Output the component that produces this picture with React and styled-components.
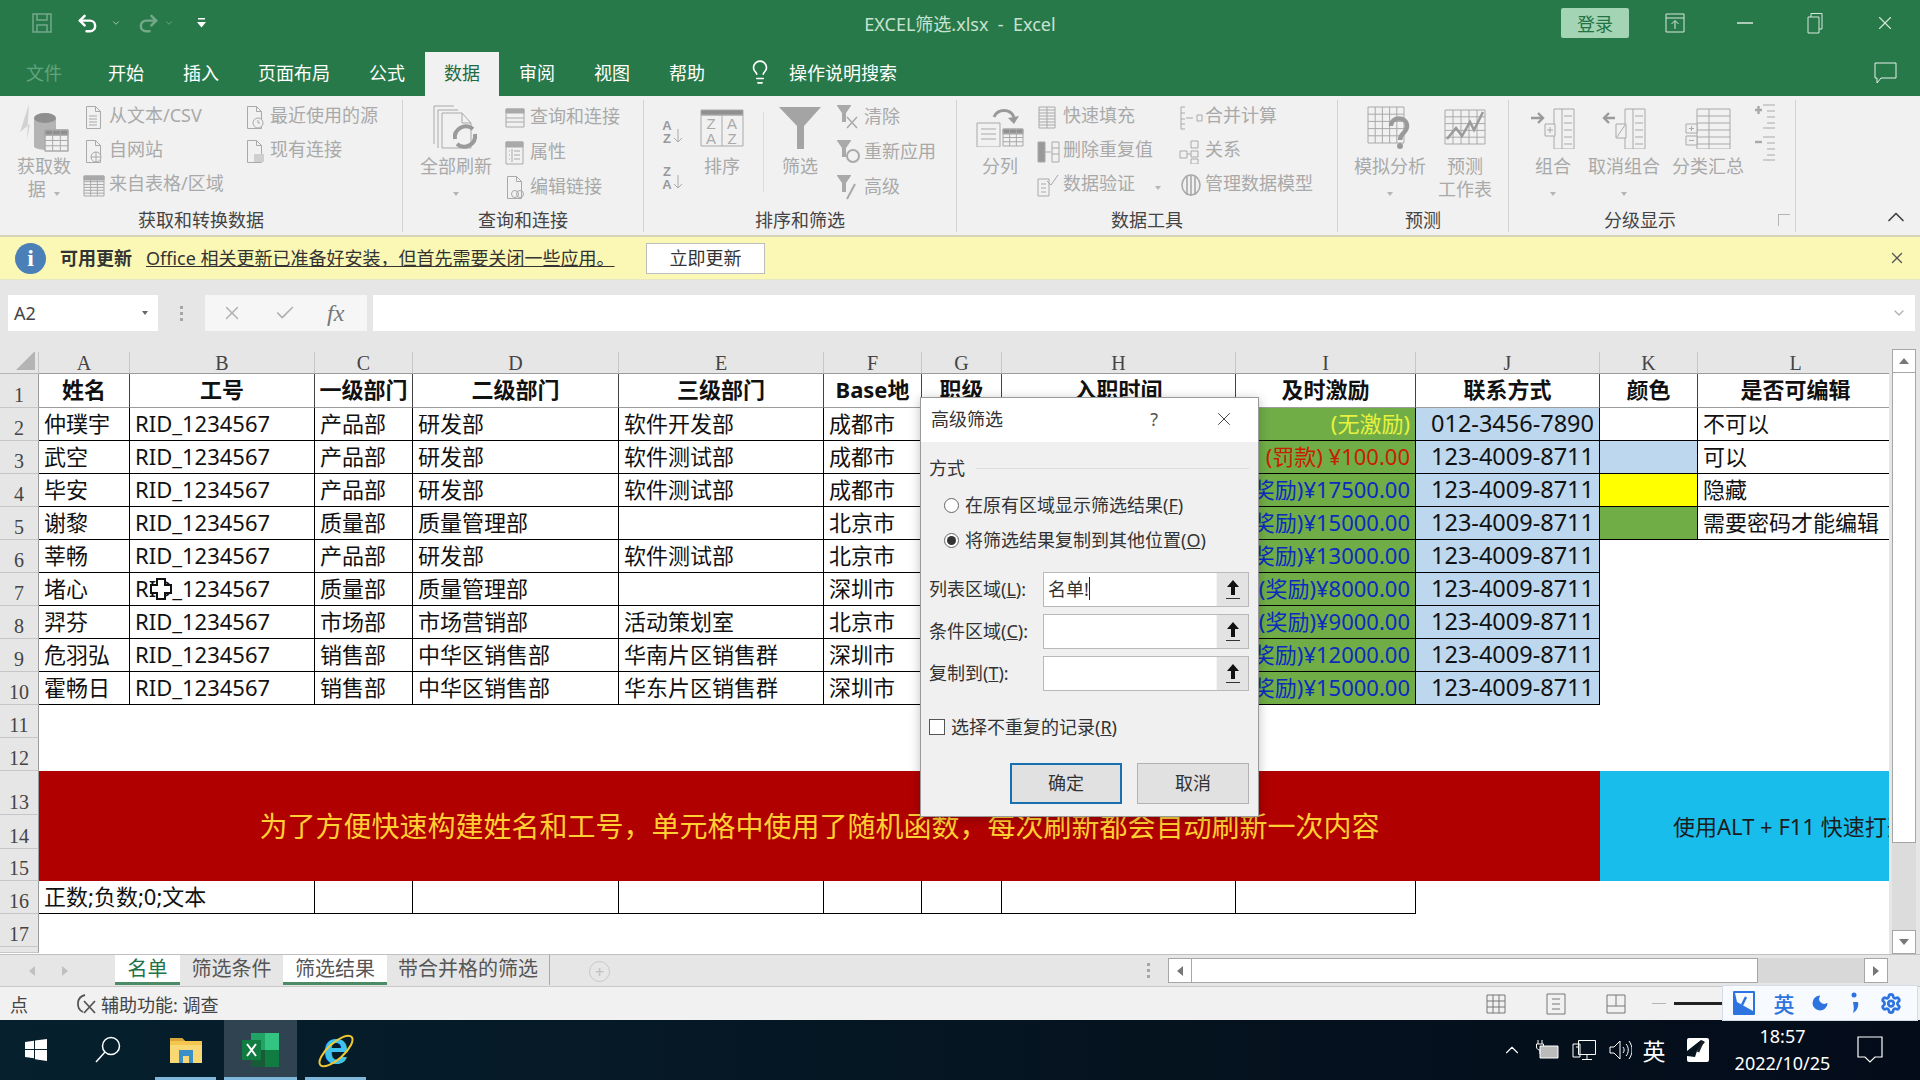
import React from 'react';
import styled, { createGlobalStyle } from 'styled-components';
import { Lightbulb, Undo2, Redo2, Moon, Settings, X, Check, ChevronUp, ChevronDown } from 'lucide-react';

const DIM = '#a9a9a9';
const FONT = '"Noto Sans", "Noto Sans CJK SC", sans-serif';

const GlobalStyle = createGlobalStyle`
  html, body { margin: 0; padding: 0; background: #e6e6e6; overflow: hidden; }
  * { box-sizing: border-box; }
`;

const Svg = ({ w, h, color = DIM, sw = 1, children }) => (
  <svg width={w} height={h} viewBox={`0 0 ${w} ${h}`} fill="none" stroke={color} strokeWidth={sw} aria-hidden="true">
    {children}
  </svg>
);

const Table = ({ x, y, w, h, cols, rows }) => {
  const lines = [];
  for (let i = 1; i < cols; i++) lines.push(`M${x + (w * i) / cols} ${y}v${h}`);
  for (let i = 1; i < rows; i++) lines.push(`M${x} ${y + (h * i) / rows}h${w}`);
  return <path d={`M${x} ${y}h${w}v${h}h-${w}z ${lines.join(' ')}`} />;
};

const PageShape = () => <path d="M4.5 1.5h9l5 5v17h-14z M13.5 1.5v5h5" />;

/* small ribbon icons */
const DocText = () => <Svg w={23} h={25}><PageShape /><path d="M7 11h8M7 14h8M7 17h8M7 20h8" /></Svg>;
const DocWeb = () => <Svg w={23} h={25}><PageShape /><circle cx="14" cy="18" r="5" fill="#f1f1f1" /><path d="M9 18h10M14 13v10" /></Svg>;
const DocClock = () => <Svg w={23} h={25}><PageShape /><circle cx="15" cy="18" r="5" fill="#f1f1f1" /><path d="M15 15v3h2" /></Svg>;
const DocLink = () => <Svg w={23} h={25}><PageShape /><rect x="11" y="15" width="10" height="8" fill="#cfcfcf" stroke="none" /></Svg>;
const DocChain = () => <Svg w={23} h={25}><PageShape /><circle cx="12" cy="19" r="3.5" fill="#f1f1f1" /><circle cx="17" cy="19" r="3.5" /></Svg>;
const SmTable = () => <Svg w={24} h={25}><path d="M2 3h20v4H2z" fill={DIM} /><Table x={2} y={3} w={20} h={20} cols={3} rows={7} /></Svg>;
const SmPanel = () => <Svg w={23} h={24}><path d="M3 3h18v4H3z" fill={DIM} /><Table x={3} y={3} w={18} h={18} cols={1} rows={1} /><path d="M3 12h18M3 16h18" /></Svg>;
const PropsIcon = () => <Svg w={22} h={25}><path d="M3 2h17v5H3z" fill={DIM} /><path d="M3 2h17v22H3z M9 9v13M6 11h1M11 11h6M6 15h1M11 15h6M6 19h1M11 19h6" /></Svg>;
const Funnel = ({ w = 14, h = 17 }) => (
  <svg width={w} height={h} viewBox="0 0 14 17" aria-hidden="true"><path d="M0 0h14L8.5 8v9h-3V8z" fill={DIM} /></svg>
);
const ClearFilter = () => <Svg w={25} h={25}><Funnel /><path d="M10 12l10 11M20 12L10 23" strokeWidth="1.5" /></Svg>;
const ReapplyFilter = () => <Svg w={25} h={25}><Funnel /><circle cx="16" cy="16" r="6" strokeWidth="2" /></Svg>;
const AdvFilter = () => <Svg w={25} h={25}><Funnel /><path d="M18 9L10 24" strokeWidth="2" /></Svg>;
const FlashFill = () => <Svg w={22} h={25}><Table x={3} y={2} w={16} h={21} cols={2} rows={7} /></Svg>;
const Dedupe = () => <Svg w={25} h={25}><path d="M2 3h7v20H2z" fill="#999" /><path d="M16 3h7v20h-7zM16 9h7M16 15h7M9 13h6" /></Svg>;
const Validate = () => <Svg w={25} h={25}><path d="M2 6h11v17H2zM5 11h5M5 15h5M5 19h5M11 8l4 4 7-10" /></Svg>;
const Consolidate = () => <Svg w={25} h={25}><path d="M3 2v22M3 2h4M3 24h4M3 8h4M3 14h4M3 19h4M8 13h7M19 10h5v6h-5z" /></Svg>;
const Relations = () => <Svg w={25} h={25}><path d="M2 12h7v7H2zM13 2h7v7h-7zM13 12h7v6h-7zM13 20h7v5h-7zM9 15h4" /></Svg>;
const DataModel = () => <Svg w={25} h={25} sw={1.6}><ellipse cx="13" cy="12" rx="9" ry="10" /><path d="M9 4v18M13 3v20M17 4v18" /></Svg>;
const OutlineAdd = () => <Svg w={24} h={28}><path d="M10 3h12M14 9h8M14 15h8M14 21h8M10 26h12" /><path d="M2 8h7M5.5 4v8" stroke={DIM} strokeWidth="2.4" /></Svg>;
const OutlineDel = () => <Svg w={24} h={28}><path d="M10 3h12M14 9h8M14 15h8M14 21h8M10 26h12" /><path d="M2 8h7" stroke={DIM} strokeWidth="2.4" /></Svg>;

/* big ribbon icons */
const GetDataIcon = () => (
  <Svg w={50} h={48}>
    <path d="M10 0L1 28l10-8-3 16z" fill="#d2d2d2" stroke="none" />
    <path d="M15 14v28c0 5 22 5 22 0V14" fill="#b4b4b4" stroke="none" />
    <ellipse cx="26" cy="14" rx="11" ry="5" fill="#8f8f8f" stroke="none" />
    <rect x="26" y="26" width="23" height="21" fill="#f1f1f1" />
    <path d="M26 26h23v5H26z" fill="#8f8f8f" />
    <Table x={26} y={26} w={23} h={21} cols={3} rows={4} />
  </Svg>
);
const RefreshIcon = () => (
  <Svg w={46} h={48}>
    <path d="M1 2h20M1 2v38M5 6h20M5 6v38" />
    <path d="M9 9h20l9 10v25H9z M29 9v10h9" fill="#f1f1f1" />
    <path d="M22 35a11 11 0 0 1 18-10" stroke="#9a9a9a" strokeWidth="4" />
    <path d="M42 30a11 11 0 0 1-18 10" stroke="#9a9a9a" strokeWidth="4" />
  </Svg>
);
const SheetLetter = ({ x, y, children }) => (
  <text x={x} y={y} textAnchor="middle" fontFamily="Liberation Sans, sans-serif" fontSize="15" fill={DIM} stroke="none">{children}</text>
);
const SortBigIcon = () => (
  <Svg w={44} h={38}>
    <path d="M1 1h42v5H1z" fill="#8f8f8f" />
    <path d="M1 6h42v31H1zM22 6v31" />
    <SheetLetter x={11} y={20}>Z</SheetLetter><SheetLetter x={32} y={20}>A</SheetLetter>
    <SheetLetter x={11} y={35}>A</SheetLetter><SheetLetter x={32} y={35}>Z</SheetLetter>
  </Svg>
);
const SortAZ = ({ top, bottom }) => (
  <Svg w={22} h={26}>
    <text x="6" y="12" textAnchor="middle" fontFamily="Liberation Sans, sans-serif" fontWeight="700" fontSize="13" fill="#999" stroke="none">{top}</text>
    <text x="6" y="25" textAnchor="middle" fontFamily="Liberation Sans, sans-serif" fontWeight="700" fontSize="13" fill="#999" stroke="none">{bottom}</text>
    <path d="M17 11v13M13 20l4 4 4-4" />
  </Svg>
);
const BigFunnel = () => (
  <svg width="42" height="42" viewBox="0 0 42 42" aria-hidden="true"><path d="M0 0h42L25 19v23h-7V19z" fill="#a4a4a4" /></svg>
);
const SplitIcon = () => (
  <Svg w={48} h={38}>
    <path d="M18 8a11 11 0 0 1 20 0" stroke="#999" strokeWidth="3" />
    <path d="M32 9l6 6 5-8z" fill="#999" stroke="none" />
    <path d="M1 14h23v24H1zM5 20h15M5 25h15M5 30h15" />
    <path d="M27 20h20v5H27z" fill="#8f8f8f" />
    <Table x={27} y={20} w={20} h={17} cols={3} rows={4} />
  </Svg>
);
const WhatIfIcon = () => (
  <Svg w={46} h={44}>
    <Table x={1} y={1} w={36} h={36} cols={5} rows={5} />
    <path d="M24 20c0-10 16-10 16 0 0 7-7 7-7 14" stroke="#9a9a9a" strokeWidth="4.5" />
    <circle cx="33" cy="40" r="3" fill="#9a9a9a" stroke="none" />
  </Svg>
);
const ForecastIcon = () => (
  <Svg w={42} h={38}>
    <Table x={1} y={1} w={40} h={34} cols={5} rows={5} />
    <path d="M3 30l9-11 6 8 8-14 4 8 9-18" stroke="#9a9a9a" strokeWidth="2.5" />
  </Svg>
);
const GroupIcon = () => (
  <Svg w={46} h={42}>
    <path d="M1 11h11M8 6l5 5-5 5" stroke="#9a9a9a" strokeWidth="2.4" />
    <path d="M24 2h20v40H24zM32 2v40M34 9h8M34 16h8M34 23h8M34 30h8M34 37h8" />
    <path d="M15 17h10v12H15zM20 20v6M17 23h6" fill="#f1f1f1" />
  </Svg>
);
const UngroupIcon = () => (
  <Svg w={46} h={42}>
    <path d="M14 11H3M8 6l-5 5 5 5" stroke="#9a9a9a" strokeWidth="2.4" />
    <path d="M24 2h20v40H24zM32 2v40M34 9h8M34 16h8M34 23h8M34 30h8M34 37h8" />
    <path d="M15 17h10v14H15zM16 30L24 18" fill="#f1f1f1" />
  </Svg>
);
const SubtotalIcon = () => (
  <Svg w={46} h={42}>
    <path d="M12 2h33v40H12zM24 2v40M12 9h33M12 16h33M12 23h33M12 30h33M12 37h33" />
    <path d="M1 17h11v9H1zM1 29h11v9H1zM6.5 19v5M4 21.5h5M4 33.5h5" fill="#f1f1f1" />
  </Svg>
);

const Page = styled.div`
  position: relative;
  width: 1920px;
  height: 1080px;
  display: flex;
  flex-direction: column;
  overflow: hidden;
  font-family: ${FONT};
  color: #333;
  background: #e6e6e6;
`;

const Header = styled.header`
  height: 96px;
  background: #28794a;
  color: #fff;
  flex: none;
`;

const TitleBar = styled.div`
  height: 46px;
  display: grid;
  grid-template-columns: 1fr auto 1fr;
  align-items: center;
`;

const Qat = styled.div`
  display: flex;
  align-items: center;
  padding-left: 31px;
`;

const QatSlot = styled.span`
  display: flex;
  justify-content: center;
  width: ${(p) => p.$w}px;
  margin-right: ${(p) => p.$mr || 0}px;
  opacity: ${(p) => (p.$dim ? 0.35 : 1)};
`;

const DocTitle = styled.div`
  font-size: 18px;
  color: #c8e2d2;
  white-space: pre;
`;

const WinControls = styled.div`
  display: flex;
  align-items: center;
  justify-content: flex-end;
`;

const LoginButton = styled.div`
  width: 68px;
  height: 30px;
  margin-right: 11px;
  display: flex;
  align-items: center;
  justify-content: center;
  background: #a3d4b3;
  color: #217346;
  font-size: 18px;
  border-radius: 2px;
`;

const WinSlot = styled.span`
  width: 70px;
  display: flex;
  justify-content: center;
`;

const TabRow = styled.nav`
  height: 50px;
  display: flex;
  align-items: flex-end;
  gap: 1px;
  padding-left: 7px;
  font-size: 18px;
`;

const Tab = styled.div`
  height: 44px;
  padding: 0 19px 4px;
  display: flex;
  align-items: center;
  margin-right: ${(p) => p.$mr || 0}px;
  color: ${(p) => (p.$dim ? '#62a47d' : p.$active ? '#1f6b42' : '#fff')};
  background: ${(p) => (p.$active ? '#f1f1f1' : 'transparent')};
`;

const SearchHint = styled.div`
  height: 44px;
  padding-bottom: 4px;
  display: flex;
  align-items: center;
  gap: 16px;
  margin-left: 22px;
`;

const CommentSlot = styled.div`
  height: 44px;
  padding-bottom: 2px;
  display: flex;
  align-items: center;
  margin-left: auto;
  padding-right: 23px;
`;

const Ribbon = styled.section`
  height: 139px;
  flex: none;
  display: flex;
  background: #f1f1f1;
  padding: 4px 0 3px;
`;

const Group = styled.div`
  position: relative;
  width: ${(p) => p.$w}px;
  flex: none;
  display: flex;
  flex-direction: column;
  border-right: 1px solid #d2d2d2;
`;

const Tools = styled.div`
  flex: 1;
  display: flex;
  padding-left: ${(p) => p.$pl}px;
`;

const GroupLabel = styled.div`
  height: 27px;
  padding: 3px ${(p) => p.$pr || 0}px 0 0;
  text-align: center;
  font-size: 18px;
  line-height: 24px;
  color: #444;
`;

const BigTool = styled.div`
  width: ${(p) => p.$w}px;
  margin-left: ${(p) => p.$ml || 0}px;
  flex: none;
  display: flex;
  flex-direction: column;
  align-items: center;
  color: ${DIM};
  font-size: 18px;
  line-height: 23px;
  white-space: nowrap;
`;

const BigIcon = styled.div`
  height: 55px;
  display: flex;
  align-items: center;
  justify-content: center;
`;

const SmallCol = styled.div`
  width: ${(p) => (p.$w ? `${p.$w}px` : 'auto')};
  margin-left: ${(p) => p.$ml || 0}px;
  flex: none;
`;

const SmallItem = styled.div`
  height: ${(p) => p.$h || 34}px;
  display: flex;
  align-items: center;
  color: ${DIM};
  font-size: 18px;
  line-height: 24px;
  white-space: nowrap;
`;

const SmallLabel = styled.span`
  position: relative;
  top: -2px;
`;

const SmallIcon = styled.span`
  width: 27px;
  flex: none;
  display: flex;
  align-items: center;
`;

const Caret = styled.span`
  display: inline-block;
  width: 0;
  height: 0;
  margin-left: ${(p) => p.$ml || 0}px;
  border-left: 3px solid transparent;
  border-right: 3px solid transparent;
  border-top: 4px solid ${(p) => p.$color || '#b5b5b5'};
`;

const SortCol = styled.div`
  width: 24px;
  flex: none;
  display: flex;
  flex-direction: column;
  gap: 20px;
  padding-top: 18px;
`;

const ToolDivider = styled.div`
  width: 1px;
  height: 80px;
  margin: 12px 0 0 19px;
  background: #dcdcdc;
  flex: none;
`;

const OutlineCol = styled.div`
  width: 24px;
  margin-left: 7px;
  flex: none;
  display: flex;
  flex-direction: column;
  gap: 4px;
  padding-top: 2px;
`;

const Launcher = styled.span`
  position: absolute;
  right: 5px;
  bottom: 6px;
  width: 12px;
  height: 12px;
  border-left: 1px solid #b5b5b5;
  border-top: 1px solid #b5b5b5;
`;

const CollapseSlot = styled.div`
  flex: 1;
  display: flex;
  align-items: flex-end;
  justify-content: flex-end;
  padding: 0 10px 1px 0;
`;

const Notice = styled.section`
  height: 45px;
  flex: none;
  display: flex;
  align-items: center;
  background: #fbf8b6;
  border-top: 2px solid #d3d3b6;
  border-bottom: 1px solid #e6e6c8;
  padding-left: 15px;
  font-size: 18px;
  color: #333;
`;

const InfoDot = styled.span`
  width: 31px;
  height: 31px;
  border-radius: 50%;
  background: #4a7fb8;
  color: #fff;
  display: flex;
  align-items: center;
  justify-content: center;
  font-family: "Liberation Serif", serif;
  font-weight: 700;
  font-size: 24px;
`;

const NoticeTitle = styled.strong`
  margin-left: 14px;
  margin-top: -2px;
  font-weight: 700;
  width: 86px;
`;

const NoticeLink = styled.span`
  margin-top: -2px;
  text-decoration: underline;
  width: 500px;
`;

const NoticeButton = styled.div`
  width: 119px;
  height: 31px;
  padding-bottom: 2px;
  display: flex;
  align-items: center;
  justify-content: center;
  background: #fff;
  border: 1px solid #bdbdbd;
`;

const NoticeClose = styled.span`
  margin-left: auto;
  margin-right: 14px;
  display: flex;
`;

const FormulaArea = styled.section`
  height: 72px;
  flex: none;
  display: flex;
  padding: 15px 5px 21px 8px;
  background: #e6e6e6;
`;

const NameBox = styled.div`
  width: 150px;
  display: flex;
  align-items: center;
  justify-content: space-between;
  padding: 0 10px 0 6px;
  background: #fff;
  font-size: 18px;
  color: #444;
`;

const VDots = styled.div`
  width: 47px;
  display: flex;
  flex-direction: column;
  align-items: center;
  justify-content: center;
  gap: 3px;
`;

const VDot = styled.i`
  width: 3px;
  height: 3px;
  background: #a6a6a6;
`;

const FxBox = styled.div`
  width: 162px;
  display: flex;
  align-items: center;
  gap: 31px;
  padding-left: 16px;
  background: #f6f6f6;
`;

const FxText = styled.span`
  font-family: "Liberation Serif", serif;
  font-style: italic;
  font-size: 24px;
  color: #777;
`;

const FormulaInput = styled.div`
  flex: 1;
  margin-left: 6px;
  background: #fff;
  display: flex;
  align-items: center;
  justify-content: flex-end;
  padding-right: 8px;
`;

const SheetArea = styled.section`
  height: 602px;
  flex: none;
  display: flex;
`;

const Grid = styled.div`
  width: 1889px;
  flex: none;
  display: grid;
  grid-template-columns: 39px 91px 185px 98px 206px 205px 98px 80px 234px 180px 184px 98px 196px;
  grid-template-rows: 22px 34px repeat(9, 33px) 33px 33px 44px 34px 32px 33px 33px 6px;
  background: #fff;
  font-size: 22px;
  line-height: 26px;
  color: #111;
  overflow: hidden;
`;

const Corner = styled.div`
  background: #e6e6e6;
  border-bottom: 1px solid #b5b5b5;
  border-right: 1px solid #c6c6c6;
  position: relative;
  &::after {
    content: '';
    position: absolute;
    right: 3px;
    bottom: 3px;
    width: 19px;
    height: 19px;
    background: #b4b4b4;
    clip-path: polygon(100% 0, 100% 100%, 0 100%);
  }
`;

const ColHead = styled.div`
  background: #e6e6e6;
  border-bottom: 1px solid #9c9c9c;
  border-right: 1px solid #c6c6c6;
  display: flex;
  align-items: center;
  justify-content: center;
  font-family: "Liberation Serif", serif;
  font-size: 20px;
  color: #444;
`;

const RowHead = styled.div`
  grid-column: 1;
  background: #e6e6e6;
  border-bottom: 1px solid #c6c6c6;
  border-right: 1px solid #9c9c9c;
  display: flex;
  align-items: flex-end;
  justify-content: center;
  font-family: "Liberation Serif", serif;
  font-size: 20px;
  line-height: 24px;
  color: #444;
`;

const Cell = styled.div`
  position: relative;
  display: flex;
  align-items: center;
  padding: 0 5px 2px;
  white-space: nowrap;
  overflow: hidden;
  grid-column: span ${(p) => p.$span || 1};
  justify-content: ${(p) => (p.$right ? 'flex-end' : 'flex-start')};
  background: ${(p) => p.$bg || '#fff'};
  color: ${(p) => p.$color || '#111'};
  font-size: ${(p) => p.$size || 22}px;
  border-right: 1px solid #000;
  border-bottom: 1px solid #000;
`;

const HeadCell = styled.div`
  display: flex;
  align-items: center;
  justify-content: center;
  padding-bottom: 4px;
  font-weight: 700;
  white-space: nowrap;
  background: #fff;
  border-right: 1px solid #444;
  border-bottom: 1px solid #9c9c9c;
`;

const RedBanner = styled.div`
  grid-column: span 10;
  grid-row: span 3;
  background: #b10000;
  color: #ffcf33;
  font-size: 28px;
  line-height: 34px;
  display: flex;
  align-items: center;
  justify-content: center;
  white-space: nowrap;
`;

const BlueBanner = styled.div`
  grid-column: span 2;
  grid-row: span 3;
  background: #19bdec;
  color: #1c1c1c;
  font-size: 22px;
  display: flex;
  align-items: center;
  padding-left: 73px;
  white-space: nowrap;
  overflow: hidden;
`;

const CrossCursor = styled.span`
  position: absolute;
  left: 19px;
  top: 4px;
  display: flex;
`;

const VScroll = styled.div`
  width: 31px;
  flex: none;
  margin-top: -3px;
  padding-left: 3px;
  padding-right: 4px;
  display: flex;
  flex-direction: column;
  background: #e6e6e6;
`;

const ScrollButton = styled.div`
  flex: none;
  width: ${(p) => p.$w || 24}px;
  height: ${(p) => p.$h || 24}px;
  display: flex;
  align-items: center;
  justify-content: center;
  background: #fff;
  border: 1px solid #a6a6a6;
`;

const VThumb = styled.div`
  height: 470px;
  flex: none;
  background: #fff;
  border-left: 1px solid #a6a6a6;
  border-right: 1px solid #a6a6a6;
  border-bottom: 1px solid #a6a6a6;
`;

const VTrack = styled.div`
  flex: 1;
  background: #dcdcdc;
`;

const Triangle = styled.span`
  width: 0;
  height: 0;
  ${(p) => {
    const s = '5px solid transparent';
    const c = '6px solid #777';
    if (p.$dir === 'up') return `border-left:${s};border-right:${s};border-bottom:${c};`;
    if (p.$dir === 'down') return `border-left:${s};border-right:${s};border-top:${c};`;
    if (p.$dir === 'left') return `border-top:${s};border-bottom:${s};border-right:${c};`;
    return `border-top:${s};border-bottom:${s};border-left:${c};`;
  }}
`;

const SheetTabs = styled.section`
  height: 33px;
  flex: none;
  display: flex;
  align-items: flex-start;
  background: #e6e6e6;
  border-top: 1px solid #c0c0c0;
  border-bottom: 1px solid #c8c8c8;
  font-size: 20px;
  color: #555;
`;

const TabNav = styled.div`
  width: 115px;
  height: 31px;
  display: flex;
  align-items: center;
  gap: 27px;
  padding-left: 29px;
`;

const NavArrow = styled.span`
  width: 0;
  height: 0;
  border-top: 5px solid transparent;
  border-bottom: 5px solid transparent;
  ${(p) => (p.$dir === 'left' ? 'border-right: 6px solid #c0c0c0;' : 'border-left: 6px solid #c0c0c0;')}
`;

const SheetTab = styled.div`
  width: ${(p) => p.$w}px;
  height: 30px;
  padding-bottom: ${(p) => (p.$white ? 3 : 6)}px;
  display: flex;
  align-items: center;
  justify-content: center;
  white-space: nowrap;
  background: ${(p) => (p.$white ? '#fff' : 'transparent')};
  color: ${(p) => (p.$active ? '#217346' : '#555')};
  border-bottom: ${(p) => (p.$white ? '3px solid #4d8a66' : 'none')};
  border-right: ${(p) => (p.$sep ? '1px solid #aaa' : 'none')};
`;

const AddSheet = styled.span`
  width: 21px;
  height: 21px;
  margin: 6px 0 0 39px;
  border-radius: 50%;
  border: 1px solid #c8c8c8;
  display: flex;
  align-items: center;
  justify-content: center;
  color: #c0c0c0;
  font-size: 16px;
  line-height: 1;
`;

const HScrollWrap = styled.div`
  margin-left: auto;
  margin-right: 32px;
  padding-top: 3px;
  height: 28px;
  display: flex;
  align-items: center;
`;

const HThumb = styled.div`
  width: 566px;
  height: 25px;
  background: #fff;
  border-top: 1px solid #a6a6a6;
  border-bottom: 1px solid #a6a6a6;
  border-right: 1px solid #a6a6a6;
`;

const HTrack = styled.div`
  width: 106px;
  height: 25px;
  background: #d8d8d8;
`;

const SplitDots = styled(VDots)`
  width: auto;
  margin-right: 18px;
`;

const StatusBar = styled.footer`
  position: relative;
  height: 33px;
  flex: none;
  display: flex;
  align-items: center;
  padding-right: 186px;
  background: #f1f1f1;
  font-size: 18px;
  color: #444;
`;

const StatusText = styled.span`
  margin-left: ${(p) => p.$ml}px;
`;

const A11y = styled.span`
  margin-left: 47px;
  width: 26px;
  display: flex;
`;

const ViewSlot = styled.span`
  width: 60px;
  margin-left: ${(p) => (p.$first ? 'auto' : '0')};
  display: flex;
  justify-content: center;
`;

const ZoomMinus = styled.span`
  width: 14px;
  height: 1px;
  margin: 0 8px 0 6px;
  background: #b5b5b5;
`;

const ZoomLine = styled.span`
  width: 60px;
  height: 3px;
  background: #222;
`;

const ImeBar = styled.div`
  position: absolute;
  right: 2px;
  top: -2px;
  width: 196px;
  height: 36px;
  padding-left: 7px;
  display: flex;
  align-items: center;
  background: #f7fbff;
  border: 1px solid #d5dde6;
  color: #2e74e0;
  font-size: 21px;
  font-weight: 500;
`;

const ImeSlot = styled.span`
  width: ${(p) => p.$w}px;
  flex: none;
  display: flex;
  justify-content: center;
`;

const Taskbar = styled.footer`
  height: 60px;
  flex: none;
  display: flex;
  background: linear-gradient(90deg, #06202e 0%, #05131f 60%, #040c1a 100%);
  color: #fff;
`;

const TaskSlot = styled.div`
  position: relative;
  width: ${(p) => p.$w}px;
  margin-left: ${(p) => p.$ml || 0}px;
  flex: none;
  display: flex;
  align-items: center;
  justify-content: center;
  background: ${(p) => (p.$active ? '#2f4450' : 'transparent')};
  ${(p) =>
    p.$open &&
    `&::after {
      content: '';
      position: absolute;
      left: 0;
      right: 0;
      bottom: 0;
      height: 3px;
      background: #7fb8dc;
    }`}
`;

const Tray = styled.div`
  margin-left: auto;
  padding-right: 19px;
  display: flex;
`;

const TraySlot = styled.div`
  width: ${(p) => p.$w}px;
  flex: none;
  display: flex;
  align-items: center;
  justify-content: center;
  font-size: ${(p) => p.$size || 18}px;
`;

const Clock = styled.div`
  width: 113px;
  flex: none;
  display: flex;
  flex-direction: column;
  align-items: center;
  justify-content: center;
  font-size: 18px;
  line-height: 27px;
`;

/* the dialog floats over the sheet */
const Dialog = styled.div`
  position: absolute;
  left: 920px;
  top: 397px;
  width: 339px;
  height: 420px;
  display: flex;
  flex-direction: column;
  background: #f0f0f0;
  border: 1px solid #9a9a9a;
  box-shadow: 0 2px 10px rgba(0, 0, 0, 0.25);
  font-size: 18px;
  line-height: 24px;
  color: #333;
`;

const DialogTitle = styled.div`
  height: 44px;
  flex: none;
  display: flex;
  align-items: center;
  padding: 0 0 2px 10px;
  background: #fff;
`;

const HelpMark = styled.span`
  margin-left: auto;
  margin-right: 55px;
  color: #555;
`;

const DialogClose = styled.span`
  margin-right: 23px;
  display: flex;
`;

const DialogBody = styled.div`
  flex: 1;
  padding: 14px 9px 0 8px;
`;

const Legend = styled.div`
  height: 24px;
  display: flex;
  align-items: center;
  gap: 11px;
`;

const LegendLine = styled.span`
  flex: 1;
  height: 1px;
  background: #dcdcdc;
`;

const RadioGroup = styled.div`
  margin: 8px 0 14px 15px;
`;

const RadioRow = styled.label`
  height: 35px;
  display: flex;
  align-items: center;
  gap: 6px;
  white-space: nowrap;
`;

const RadioText = styled.span`
  margin-top: -2px;
`;

const RadioDot = styled.span`
  width: 15px;
  height: 15px;
  flex: none;
  border-radius: 50%;
  border: 1px solid #666;
  background: #fff;
  display: flex;
  align-items: center;
  justify-content: center;
  &::after {
    content: '';
    width: 9px;
    height: 9px;
    border-radius: 50%;
    background: ${(p) => (p.$on ? '#333' : 'transparent')};
  }
`;

const Fields = styled.div`
  display: flex;
  flex-direction: column;
  gap: 7px;
`;

const FieldRow = styled.div`
  height: 35px;
  display: flex;
  align-items: center;
`;

const FieldLabel = styled.span`
  width: 114px;
  flex: none;
  margin-top: -2px;
  white-space: nowrap;
`;

const FieldBox = styled.div`
  width: 206px;
  height: 35px;
  display: flex;
  background: #fff;
  border: 1px solid #b9b9b9;
`;

const FieldValue = styled.div`
  flex: 1;
  padding: 0 0 2px 4px;
  display: flex;
  align-items: center;
`;

const TextCaret = styled.span`
  width: 1px;
  height: 23px;
  background: #222;
`;

const RefButton = styled.div`
  width: 32px;
  flex: none;
  background: #e3e3e3;
  border-left: 1px solid #f5f5f5;
  display: flex;
  align-items: center;
  justify-content: center;
`;

const CheckRow = styled.label`
  height: 24px;
  margin-top: 24px;
  display: flex;
  align-items: center;
  gap: 6px;
`;

const CheckBox = styled.span`
  width: 16px;
  height: 16px;
  flex: none;
  background: #fff;
  border: 1px solid #555;
`;

const ButtonRow = styled.div`
  margin-top: 24px;
  display: flex;
  justify-content: flex-end;
  gap: 15px;
`;

const DialogButton = styled.div`
  width: 112px;
  height: 41px;
  padding-bottom: 2px;
  display: flex;
  align-items: center;
  justify-content: center;
  background: #e1e1e1;
  border: ${(p) => (p.$primary ? '2px solid #1a6fb0' : '1px solid #b2b2b2')};
`;

const COLS = 'ABCDEFGHIJKL'.split('');
const HEADS = ['姓名', '工号', '一级部门', '二级部门', '三级部门', 'Base地', '职级', '入职时间', '及时激励', '联系方式', '颜色', '是否可编辑'];
const BLUE = '#0b2bc0';
const ROWS = [
  ['仲璞宇', '产品部', '研发部', '软件开发部', '成都市', '(无激励)', '#e6f23c', '012-3456-7890', '#fff', '不可以'],
  ['武空', '产品部', '研发部', '软件测试部', '成都市', '(罚款) ¥100.00', '#c81e00', '123-4009-8711', '#bdd7ee', '可以'],
  ['毕安', '产品部', '研发部', '软件测试部', '成都市', '(奖励)¥17500.00', BLUE, '123-4009-8711', '#ffff00', '隐藏'],
  ['谢黎', '质量部', '质量管理部', '', '北京市', '(奖励)¥15000.00', BLUE, '123-4009-8711', '#70ad47', '需要密码才能编辑'],
  ['莘畅', '产品部', '研发部', '软件测试部', '北京市', '(奖励)¥13000.00', BLUE, '123-4009-8711'],
  ['堵心', '质量部', '质量管理部', '', '深圳市', '(奖励)¥8000.00', BLUE, '123-4009-8711'],
  ['羿芬', '市场部', '市场营销部', '活动策划室', '北京市', '(奖励)¥9000.00', BLUE, '123-4009-8711'],
  ['危羽弘', '销售部', '中华区销售部', '华南片区销售群', '深圳市', '(奖励)¥12000.00', BLUE, '123-4009-8711'],
  ['霍畅日', '销售部', '中华区销售部', '华东片区销售群', '深圳市', '(奖励)¥15000.00', BLUE, '123-4009-8711'],
];

const Small = ({ icon, h, children }) => (
  <SmallItem $h={h}>
    <SmallIcon>{icon}</SmallIcon>
    <SmallLabel>{children}</SmallLabel>
  </SmallItem>
);

const RibbonBar = () => (
  <Ribbon>
    <Group $w={403}>
      <Tools $pl={14}>
        <BigTool $w={60}>
          <BigIcon><GetDataIcon /></BigIcon>
          <span>获取数</span>
          <span>据 <Caret $ml={4} /></span>
        </BigTool>
        <SmallCol $w={161} $ml={8}>
          <Small icon={<DocText />}>从文本/CSV</Small>
          <Small icon={<DocWeb />}>自网站</Small>
          <Small icon={<SmTable />}>来自表格/区域</Small>
        </SmallCol>
        <SmallCol>
          <Small icon={<DocClock />}>最近使用的源</Small>
          <Small icon={<DocLink />}>现有连接</Small>
        </SmallCol>
      </Tools>
      <GroupLabel>获取和转换数据</GroupLabel>
    </Group>
    <Group $w={241}>
      <Tools $pl={15}>
        <BigTool $w={76}>
          <BigIcon><RefreshIcon /></BigIcon>
          <span>全部刷新</span>
          <span><Caret /></span>
        </BigTool>
        <SmallCol $ml={9}>
          <Small h={35} icon={<SmPanel />}>查询和连接</Small>
          <Small h={35} icon={<PropsIcon />}>属性</Small>
          <Small h={35} icon={<DocChain />}>编辑链接</Small>
        </SmallCol>
      </Tools>
      <GroupLabel>查询和连接</GroupLabel>
    </Group>
    <Group $w={313}>
      <Tools $pl={17}>
        <SortCol>
          <SortAZ top="A" bottom="Z" />
          <SortAZ top="Z" bottom="A" />
        </SortCol>
        <BigTool $w={44} $ml={15}>
          <BigIcon><SortBigIcon /></BigIcon>
          <span>排序</span>
        </BigTool>
        <ToolDivider />
        <BigTool $w={44} $ml={14}>
          <BigIcon><BigFunnel /></BigIcon>
          <span>筛选</span>
        </BigTool>
        <SmallCol $ml={15}>
          <Small h={35} icon={<ClearFilter />}>清除</Small>
          <Small h={35} icon={<ReapplyFilter />}>重新应用</Small>
          <Small h={35} icon={<AdvFilter />}>高级</Small>
        </SmallCol>
      </Tools>
      <GroupLabel>排序和筛选</GroupLabel>
    </Group>
    <Group $w={381}>
      <Tools $pl={19}>
        <BigTool $w={48}>
          <BigIcon><SplitIcon /></BigIcon>
          <span>分列</span>
        </BigTool>
        <SmallCol $w={142} $ml={12}>
          <Small icon={<FlashFill />}>快速填充</Small>
          <Small icon={<Dedupe />}>删除重复值</Small>
          <Small icon={<Validate />}>数据验证<Caret $ml={20} /></Small>
        </SmallCol>
        <SmallCol>
          <Small icon={<Consolidate />}>合并计算</Small>
          <Small icon={<Relations />}>关系</Small>
          <Small icon={<DataModel />}>管理数据模型</Small>
        </SmallCol>
      </Tools>
      <GroupLabel>数据工具</GroupLabel>
    </Group>
    <Group $w={171}>
      <Tools $pl={14}>
        <BigTool $w={76}>
          <BigIcon><WhatIfIcon /></BigIcon>
          <span>模拟分析</span>
          <span><Caret /></span>
        </BigTool>
        <BigTool $w={60} $ml={7}>
          <BigIcon><ForecastIcon /></BigIcon>
          <span>预测</span>
          <span>工作表</span>
        </BigTool>
      </Tools>
      <GroupLabel>预测</GroupLabel>
    </Group>
    <Group $w={287}>
      <Tools $pl={22}>
        <BigTool $w={44}>
          <BigIcon><GroupIcon /></BigIcon>
          <span>组合</span>
          <span><Caret /></span>
        </BigTool>
        <BigTool $w={76} $ml={11}>
          <BigIcon><UngroupIcon /></BigIcon>
          <span>取消组合</span>
          <span><Caret /></span>
        </BigTool>
        <BigTool $w={76} $ml={8}>
          <BigIcon><SubtotalIcon /></BigIcon>
          <span>分类汇总</span>
        </BigTool>
        <OutlineCol>
          <OutlineAdd />
          <OutlineDel />
        </OutlineCol>
      </Tools>
      <GroupLabel $pr={24}>分级显示</GroupLabel>
      <Launcher />
    </Group>
    <CollapseSlot>
      <ChevronUp size={28} strokeWidth={1.5} color="#444" />
    </CollapseSlot>
  </Ribbon>
);

const SheetGrid = () => (
  <Grid>
    <Corner />
    {COLS.map((c) => <ColHead key={c}>{c}</ColHead>)}
    <RowHead>1</RowHead>
    {HEADS.map((h) => <HeadCell key={h}>{h}</HeadCell>)}
    {ROWS.map((r, i) => (
      <React.Fragment key={i}>
        <RowHead>{i + 2}</RowHead>
        <Cell>{r[0]}</Cell>
        <Cell>
          RID_1234567
          {i === 5 && (
            <CrossCursor>
              <svg width="24" height="24" viewBox="0 0 24 24" aria-hidden="true">
                <path d="M8 2h8v6h6v8h-6v6H8v-6H2V8h6z" fill="#fff" stroke="#111" strokeWidth="2" />
              </svg>
            </CrossCursor>
          )}
        </Cell>
        <Cell>{r[1]}</Cell>
        <Cell>{r[2]}</Cell>
        <Cell>{r[3]}</Cell>
        <Cell>{r[4]}</Cell>
        <Cell />
        <Cell />
        <Cell $right $bg="#70ad47" $color={r[6]}>{r[5]}</Cell>
        <Cell $right $bg="#bdd7ee" $size={23.5}>{r[7]}</Cell>
        {r[8] && <Cell $bg={r[8]} />}
        {r[9] && <Cell>{r[9]}</Cell>}
      </React.Fragment>
    ))}
    <RowHead>11</RowHead>
    <RowHead>12</RowHead>
    <RowHead>13</RowHead>
    <RedBanner>为了方便快速构建姓名和工号，单元格中使用了随机函数，每次刷新都会自动刷新一次内容</RedBanner>
    <BlueBanner>使用ALT + F11 快速打开VBA编辑器</BlueBanner>
    <RowHead>14</RowHead>
    <RowHead>15</RowHead>
    <RowHead>16</RowHead>
    <Cell $span={2}>正数;负数;0;文本</Cell>
    <Cell /><Cell /><Cell /><Cell /><Cell /><Cell /><Cell />
    <RowHead>17</RowHead>
    <RowHead />
  </Grid>
);

const AdvancedFilterDialog = () => {
  const refIcon = (
    <svg width="14" height="20" viewBox="0 0 14 20" aria-hidden="true">
      <path d="M7 0l6 7H9v8H5V7H1z" fill="#111" />
      <path d="M0 18.5h14" stroke="#333" />
    </svg>
  );
  return (
    <Dialog>
      <DialogTitle>
        高级筛选
        <HelpMark>?</HelpMark>
        <DialogClose><X size={22} strokeWidth={1} color="#333" /></DialogClose>
      </DialogTitle>
      <DialogBody>
        <Legend>方式<LegendLine /></Legend>
        <RadioGroup>
          <RadioRow><RadioDot /><RadioText>在原有区域显示筛选结果(<u>F</u>)</RadioText></RadioRow>
          <RadioRow><RadioDot $on /><RadioText>将筛选结果复制到其他位置(<u>O</u>)</RadioText></RadioRow>
        </RadioGroup>
        <Fields>
          <FieldRow>
            <FieldLabel>列表区域(<u>L</u>):</FieldLabel>
            <FieldBox>
              <FieldValue>名单!<TextCaret /></FieldValue>
              <RefButton>{refIcon}</RefButton>
            </FieldBox>
          </FieldRow>
          <FieldRow>
            <FieldLabel>条件区域(<u>C</u>):</FieldLabel>
            <FieldBox>
              <FieldValue />
              <RefButton>{refIcon}</RefButton>
            </FieldBox>
          </FieldRow>
          <FieldRow>
            <FieldLabel>复制到(<u>T</u>):</FieldLabel>
            <FieldBox>
              <FieldValue />
              <RefButton>{refIcon}</RefButton>
            </FieldBox>
          </FieldRow>
        </Fields>
        <CheckRow><CheckBox /><span>选择不重复的记录(<u>R</u>)</span></CheckRow>
        <ButtonRow>
          <DialogButton $primary>确定</DialogButton>
          <DialogButton>取消</DialogButton>
        </ButtonRow>
      </DialogBody>
    </Dialog>
  );
};

const TaskbarRow = () => (
  <Taskbar>
    <TaskSlot $w={71}>
      <svg width="22" height="22" viewBox="0 0 22 22" aria-hidden="true">
        <path d="M0 3l9-1.3V10H0zM10 1.500L22 0v10H10zM0 11h9v8.300L0 18zM10 11h12v11l-12-1.700z" fill="#fff" />
      </svg>
    </TaskSlot>
    <TaskSlot $w={73}>
      <svg width="26" height="28" viewBox="0 0 26 28" fill="none" stroke="#fff" strokeWidth="1.5" aria-hidden="true">
        <circle cx="16" cy="10" r="8.5" />
        <path d="M10 16L1 26" />
      </svg>
    </TaskSlot>
    <TaskSlot $w={61} $ml={11} $open>
      <svg width="32" height="28" viewBox="0 0 32 28" aria-hidden="true">
        <path d="M0 2h12l3 3h17v22H0z" fill="#f4c64f" />
        <path d="M0 2h12l3 3H0z" fill="#d9a63a" />
        <path d="M0 9h32v18H0z" fill="#f8d775" />
        <path d="M9 14h14v13h-4v-7h-6v7H9z" fill="#3a8fc9" />
      </svg>
    </TaskSlot>
    <TaskSlot $w={73} $ml={8} $active $open>
      <svg width="37" height="34" viewBox="0 0 37 34" aria-hidden="true">
        <path d="M9 0h28v34H9z" fill="#21a366" />
        <path d="M23 0h14v17H23z" fill="#33c481" />
        <path d="M9 17h14v17H9z" fill="#185c37" />
        <path d="M23 17h14v17H23z" fill="#107c41" />
        <path d="M0 7h19v20H0z" fill="#107c41" />
        <path d="M5 11l9 12M14 11L5 23" stroke="#fff" strokeWidth="2" />
      </svg>
    </TaskSlot>
    <TaskSlot $w={61} $ml={8} $open>
      <svg width="38" height="38" viewBox="0 0 38 38" aria-hidden="true">
        <text x="19" y="33" textAnchor="middle" fontFamily="Liberation Sans, sans-serif" fontWeight="700" fontSize="46" fill="#3fc3ee">e</text>
        <ellipse cx="19" cy="20" rx="21" ry="8" transform="rotate(-42 19 20)" fill="none" stroke="#f0c832" strokeWidth="2" />
      </svg>
    </TaskSlot>
    <Tray>
      <TraySlot $w={34}><ChevronUp size={22} strokeWidth={1.2} color="#fff" /></TraySlot>
      <TraySlot $w={36}>
        <svg width="24" height="20" viewBox="0 0 24 20" fill="none" stroke="#fff" aria-hidden="true">
          <path d="M3 0v4M7 0v4M1.5 4h7v3c0 2-2 3-3.500 3S1.5 9 1.500 7zM5 10v4h3" />
          <path d="M5 6h18v12H5z" fill="#bbb" />
        </svg>
      </TraySlot>
      <TraySlot $w={37}>
        <svg width="24" height="24" viewBox="0 0 24 24" fill="none" stroke="#fff" aria-hidden="true">
          <path d="M6.5 2.5h17v14h-17zM1 6h7v13H1zM4 9h2M15 17v4M10 21.5h10" fill="#06121f" />
        </svg>
      </TraySlot>
      <TraySlot $w={36}>
        <svg width="24" height="24" viewBox="0 0 24 24" fill="none" stroke="#fff" aria-hidden="true">
          <path d="M2 9h4l6-6v18l-6-6H2zM15 9c1.500 2 1.500 4 0 6M18 6c3 3 3 9 0 12M21 3c4 5 4 13 0 18" />
        </svg>
      </TraySlot>
      <TraySlot $w={32} $size={23}>英</TraySlot>
      <TraySlot $w={56}>
        <svg width="22" height="24" viewBox="0 0 22 24" aria-hidden="true">
          <path d="M2 0h18a2 2 0 0 1 2 2v20a2 2 0 0 1-2 2H2a2 2 0 0 1-2-2V2a2 2 0 0 1 2-2z" fill="#fff" />
          <path d="M0 13L14 2l4 2-8 9-2 6-8-1z" fill="#05131f" />
          <path d="M16 3l-5 11" stroke="#222" strokeWidth="2.5" />
        </svg>
      </TraySlot>
      <Clock>
        <span>18:57</span>
        <span>2022/10/25</span>
      </Clock>
      <TraySlot $w={62}>
        <svg width="26" height="28" viewBox="0 0 26 28" fill="none" stroke="#fff" strokeWidth="1.2" aria-hidden="true">
          <path d="M1 1h24v20h-7l-5 5-5-5H1z" />
        </svg>
      </TraySlot>
    </Tray>
  </Taskbar>
);

const App = () => (
  <Page>
    <GlobalStyle />
    <Header>
      <TitleBar>
        <Qat>
          <QatSlot $w={22} $dim $mr={22}>
            <svg width="20" height="20" viewBox="0 0 20 20" fill="none" stroke="#fff" strokeWidth="1.5" aria-hidden="true">
              <path d="M1 1h18v18H1zM5 1v6h10V1M5 19v-7h10v7" />
            </svg>
          </QatSlot>
          <QatSlot $w={24}><Undo2 size={23} strokeWidth={2.6} color="#fff" /></QatSlot>
          <QatSlot $w={34} $mr={3}><ChevronDown size={10} color="#b7d6c3" /></QatSlot>
          <QatSlot $w={24} $dim><Redo2 size={23} strokeWidth={2.6} color="#fff" /></QatSlot>
          <QatSlot $w={18} $dim $mr={16}><ChevronDown size={10} color="#fff" /></QatSlot>
          <QatSlot $w={14}>
            <svg width="9" height="10" viewBox="0 0 9 10" aria-hidden="true"><path d="M1 0h7v1.5H1zM0 4h9L4.5 9.5z" fill="#fff" /></svg>
          </QatSlot>
        </Qat>
        <DocTitle>EXCEL筛选.xlsx  -  Excel</DocTitle>
        <WinControls>
          <LoginButton>登录</LoginButton>
          <WinSlot>
            <svg width="20" height="20" viewBox="0 0 20 20" fill="none" stroke="#d6e8dc" aria-hidden="true">
              <path d="M1 1h18v18H1zM1 5h18M10 16V8M6.500 11L10 7.500l3.500 3.500" />
            </svg>
          </WinSlot>
          <WinSlot><svg width="16" height="2" aria-hidden="true"><path d="M0 1h16" stroke="#d6e8dc" strokeWidth="1.5" /></svg></WinSlot>
          <WinSlot>
            <svg width="16" height="22" viewBox="0 0 16 22" fill="none" stroke="#d6e8dc" aria-hidden="true">
              <path d="M1 5h11v16H1zM4 5V1.500h11V17h-3" />
            </svg>
          </WinSlot>
          <WinSlot><X size={22} strokeWidth={1.2} color="#d6e8dc" /></WinSlot>
        </WinControls>
      </TitleBar>
      <TabRow>
        <Tab $dim $mr={7}>文件</Tab>
        <Tab>开始</Tab>
        <Tab>插入</Tab>
        <Tab>页面布局</Tab>
        <Tab>公式</Tab>
        <Tab $active>数据</Tab>
        <Tab>审阅</Tab>
        <Tab>视图</Tab>
        <Tab>帮助</Tab>
        <SearchHint>
          <Lightbulb size={26} strokeWidth={1.5} color="#fff" />
          操作说明搜索
        </SearchHint>
        <CommentSlot>
          <svg width="23" height="24" viewBox="0 0 23 24" fill="none" stroke="#e6f1ea" aria-hidden="true">
            <path d="M1 2h21v15H7l-4 5v-5H1z" />
          </svg>
        </CommentSlot>
      </TabRow>
    </Header>
    <RibbonBar />
    <Notice>
      <InfoDot>i</InfoDot>
      <NoticeTitle>可用更新</NoticeTitle>
      <NoticeLink>Office 相关更新已准备好安装，但首先需要关闭一些应用。</NoticeLink>
      <NoticeButton>立即更新</NoticeButton>
      <NoticeClose><X size={18} strokeWidth={1.8} color="#555" /></NoticeClose>
    </Notice>
    <FormulaArea>
      <NameBox>A2<Caret $color="#666" /></NameBox>
      <VDots><VDot /><VDot /><VDot /></VDots>
      <FxBox>
        <X size={22} strokeWidth={1.6} color="#b0b0b0" />
        <Check size={22} strokeWidth={1.8} color="#b0b0b0" />
        <FxText>fx</FxText>
      </FxBox>
      <FormulaInput><ChevronDown size={16} color="#b0b0b0" /></FormulaInput>
    </FormulaArea>
    <SheetArea>
      <SheetGrid />
      <VScroll>
        <ScrollButton><Triangle $dir="up" /></ScrollButton>
        <VThumb />
        <VTrack />
        <ScrollButton><Triangle $dir="down" /></ScrollButton>
      </VScroll>
    </SheetArea>
    <SheetTabs>
      <TabNav><NavArrow $dir="left" /><NavArrow $dir="right" /></TabNav>
      <SheetTab $w={65} $white $active>名单</SheetTab>
      <SheetTab $w={103}>筛选条件</SheetTab>
      <SheetTab $w={104} $white>筛选结果</SheetTab>
      <SheetTab $w={163} $sep>带合并格的筛选</SheetTab>
      <AddSheet>+</AddSheet>
      <HScrollWrap>
        <SplitDots><VDot /><VDot /><VDot /></SplitDots>
        <ScrollButton $h={25}><Triangle $dir="left" /></ScrollButton>
        <HThumb />
        <HTrack />
        <ScrollButton $h={25}><Triangle $dir="right" /></ScrollButton>
      </HScrollWrap>
    </SheetTabs>
    <StatusBar>
      <StatusText $ml={10}>点</StatusText>
      <A11y>
        <svg width="24" height="24" viewBox="0 0 24 24" fill="none" stroke="#555" strokeWidth="1.8" aria-hidden="true">
          <path d="M10 3C1 5 1 17 8 20M9 9l11 12M20 9L9 21" />
        </svg>
      </A11y>
      <StatusText $ml={0}>辅助功能: 调查</StatusText>
      <ViewSlot $first>
        <svg width="20" height="20" viewBox="0 0 20 20" fill="none" stroke="#777" aria-hidden="true">
          <path d="M1 1h18v18H1zM7 1v18M13 1v18M1 7h18M1 13h18" />
        </svg>
      </ViewSlot>
      <ViewSlot>
        <svg width="20" height="22" viewBox="0 0 20 22" fill="none" stroke="#777" aria-hidden="true">
          <path d="M1 1h18v20H1zM6 6h8M6 11h8M6 16h8" />
        </svg>
      </ViewSlot>
      <ViewSlot>
        <svg width="20" height="20" viewBox="0 0 20 20" fill="none" stroke="#777" aria-hidden="true">
          <path d="M1 1h18v18H1zM1 12h18M10 1v11" />
        </svg>
      </ViewSlot>
      <ZoomMinus />
      <ZoomLine />
      <ImeBar>
        <ImeSlot $w={28}>
          <svg width="24" height="26" viewBox="0 0 24 26" aria-hidden="true">
            <path d="M2 1h20a1 1 0 0 1 1 1v22a1 1 0 0 1-1 1H2a1 1 0 0 1-1-1V2a1 1 0 0 1 1-1z" fill="#2e74e0" />
            <path d="M3 3h18v18L5 12z" fill="#f7fbff" />
            <path d="M14 7l-4 8" stroke="#2e74e0" strokeWidth="2.5" />
          </svg>
        </ImeSlot>
        <ImeSlot $w={52}>英</ImeSlot>
        <ImeSlot $w={20}><Moon size={22} fill="#2e74e0" strokeWidth={0} /></ImeSlot>
        <ImeSlot $w={50}>
          <svg width="10" height="22" viewBox="0 0 10 22" aria-hidden="true">
            <circle cx="4" cy="3" r="2.5" fill="#2e74e0" />
            <path d="M3 10h5c1 4-1 9-5 11 1-3 1-6 0-11z" fill="#2e74e0" />
          </svg>
        </ImeSlot>
        <ImeSlot $w={22}><Settings size={23} strokeWidth={3} color="#2e74e0" /></ImeSlot>
      </ImeBar>
    </StatusBar>
    <TaskbarRow />
    <AdvancedFilterDialog />
  </Page>
);

export default App;
